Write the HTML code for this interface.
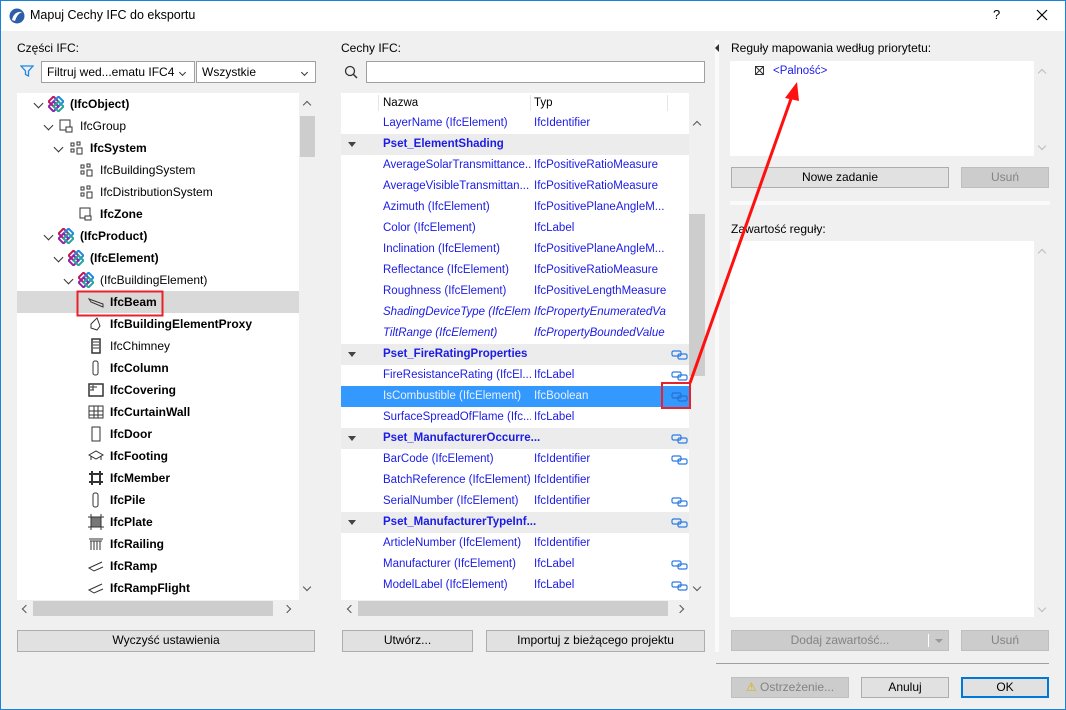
<!DOCTYPE html>
<html><head><meta charset="utf-8"><style>
*{box-sizing:border-box;margin:0;padding:0}
body{width:1066px;height:710px;background:#f0f0f0;font-family:"Liberation Sans",sans-serif;font-size:12px;color:#000;position:relative;overflow:hidden}
.a{position:absolute}
.win{left:0;top:0;width:1066px;height:710px;border:1px solid #1883d7}
.title{left:1px;top:1px;width:1064px;height:30px;background:#fff}
.lbl{position:absolute;white-space:nowrap}
.sel{position:absolute;height:22px;background:#fff;border:1px solid #a0a0a0;padding:3px 5px;white-space:nowrap}
.btn{position:absolute;height:21px;background:#e1e1e1;border:1px solid #adadad;text-align:center;line-height:19px;white-space:nowrap}
.dis{background:#cccccc;border-color:#bfbfbf;color:#838383}
.tree{left:17px;top:93px;width:282px;height:507px;background:#fff;overflow:hidden}
.row{position:absolute;height:22px;line-height:22px;white-space:nowrap;left:0;width:282px}
.b{font-weight:bold}
.chev{position:absolute;top:7px;width:7px;height:7px;border-right:1.5px solid #333;border-bottom:1.5px solid #333;transform:rotate(45deg)}
.sc{position:absolute;width:6px;height:6px;border-right:1.3px solid #555;border-bottom:1.3px solid #555}
.up{transform:rotate(-135deg)}.dn{transform:rotate(45deg)}.lf{transform:rotate(135deg)}.rt{transform:rotate(-45deg)}
.ico{position:absolute;top:3px;width:16px;height:16px}
.tbl{left:341px;top:93px;width:348px;height:507px;background:#fff;overflow:hidden;font-size:11.5px}
.tr{position:absolute;left:0;width:348px;height:21px;line-height:21px;color:#1b1be6;white-space:nowrap}
.tr .n{position:absolute;left:42px;width:148px;overflow:hidden}
.tr .t{position:absolute;left:193px;width:132px;overflow:hidden}
.g{background:#ececec;font-weight:bold}
.g .n{width:200px}
.tri{position:absolute;left:7px;top:8px;border-left:4px solid transparent;border-right:4px solid transparent;border-top:5px solid #444}
.lk{position:absolute;left:330px;top:6px;width:18px;height:10px}
.i{font-style:italic}
</style></head><body>
<div class="a win"></div>
<div class="a title"></div>
<svg class="a" style="left:9px;top:8px" width="16" height="16"><circle cx="8" cy="8" r="7.5" fill="#2d5fa8"/><path d="M3 12 Q5 3 13 4 Q8 6 6 13Z" fill="#fff"/></svg>
<div class="lbl" style="left:30px;top:8px;font-size:12.5px">Mapuj Cechy IFC do eksportu</div>
<div class="lbl" style="left:993px;top:7px;font-size:13px">?</div>
<svg class="a" style="left:1036px;top:9px" width="12" height="12"><path d="M1 1L11 11M11 1L1 11" stroke="#000" stroke-width="1.2"/></svg>

<!-- left -->
<div class="lbl" style="left:17px;top:41px">Części IFC:</div>
<svg class="a" style="left:20px;top:64px" width="14" height="14"><path d="M1 2H13L8.5 7V12L5.5 10.5V7Z" fill="none" stroke="#1e88e5" stroke-width="1.3"/></svg>
<div class="sel" style="left:41px;top:61px;width:154px">Filtruj wed...ematu IFC4</div>
<div class="chev" style="left:180px;top:70px;width:5px;height:5px;border-width:1px"></div>
<div class="sel" style="left:196px;top:61px;width:120px">Wszystkie</div>
<div class="chev" style="left:302px;top:70px;width:5px;height:5px;border-width:1px"></div>

<div class="a tree">
<div class="row" style="top:0"><div class="chev" style="left:18px"></div><svg class="ico" style="left:31px" viewBox="0 0 16 16"><rect x="2" y="2" width="7" height="7" transform="rotate(45 5.5 5.5)" fill="none" stroke="#c2185b" stroke-width="2"/><rect x="7" y="2" width="7" height="7" transform="rotate(45 10.5 5.5)" fill="none" stroke="#1e88e5" stroke-width="2"/><rect x="2" y="7" width="7" height="7" transform="rotate(45 5.5 10.5)" fill="none" stroke="#8e24aa" stroke-width="2"/><rect x="7" y="7" width="7" height="7" transform="rotate(45 10.5 10.5)" fill="none" stroke="#26a69a" stroke-width="2"/></svg><span class="b" style="position:absolute;left:53px">(IfcObject)</span></div>
<div class="row" style="top:22px"><div class="chev" style="left:28px"></div><svg class="ico" style="left:41px" viewBox="0 0 16 16"><rect x="2" y="2" width="10" height="10" fill="none" stroke="#333"/><rect x="8" y="9" width="6" height="5" fill="#fff" stroke="#333"/></svg><span style="position:absolute;left:63px">IfcGroup</span></div>
<div class="row" style="top:44px"><div class="chev" style="left:38px"></div><svg class="ico" style="left:51px" viewBox="0 0 16 16"><path d="M3 3h3v3H3zM9 2h3v3H9zM3 9h3v3H3zM9 8h5v6H9z" fill="none" stroke="#333"/></svg><span class="b" style="position:absolute;left:73px">IfcSystem</span></div>
<div class="row" style="top:66px"><svg class="ico" style="left:61px" viewBox="0 0 16 16"><path d="M3 3h3v3H3zM9 2h3v3H9zM3 9h3v3H3zM9 8h5v6H9z" fill="none" stroke="#333"/></svg><span style="position:absolute;left:83px">IfcBuildingSystem</span></div>
<div class="row" style="top:88px"><svg class="ico" style="left:61px" viewBox="0 0 16 16"><path d="M3 3h3v3H3zM9 2h3v3H9zM3 9h3v3H3zM9 8h5v6H9z" fill="none" stroke="#333"/></svg><span style="position:absolute;left:83px">IfcDistributionSystem</span></div>
<div class="row" style="top:110px"><svg class="ico" style="left:61px" viewBox="0 0 16 16"><rect x="2" y="2" width="10" height="10" fill="none" stroke="#333"/><rect x="7" y="10" width="6" height="4" fill="#fff" stroke="#333"/></svg><span class="b" style="position:absolute;left:83px">IfcZone</span></div>
<div class="row" style="top:132px"><div class="chev" style="left:28px"></div><svg class="ico" style="left:41px" viewBox="0 0 16 16"><rect x="2" y="2" width="7" height="7" transform="rotate(45 5.5 5.5)" fill="none" stroke="#c2185b" stroke-width="2"/><rect x="7" y="2" width="7" height="7" transform="rotate(45 10.5 5.5)" fill="none" stroke="#1e88e5" stroke-width="2"/><rect x="2" y="7" width="7" height="7" transform="rotate(45 5.5 10.5)" fill="none" stroke="#8e24aa" stroke-width="2"/><rect x="7" y="7" width="7" height="7" transform="rotate(45 10.5 10.5)" fill="none" stroke="#26a69a" stroke-width="2"/></svg><span class="b" style="position:absolute;left:63px">(IfcProduct)</span></div>
<div class="row" style="top:154px"><div class="chev" style="left:38px"></div><svg class="ico" style="left:51px" viewBox="0 0 16 16"><rect x="2" y="2" width="7" height="7" transform="rotate(45 5.5 5.5)" fill="none" stroke="#c2185b" stroke-width="2"/><rect x="7" y="2" width="7" height="7" transform="rotate(45 10.5 5.5)" fill="none" stroke="#1e88e5" stroke-width="2"/><rect x="2" y="7" width="7" height="7" transform="rotate(45 5.5 10.5)" fill="none" stroke="#8e24aa" stroke-width="2"/><rect x="7" y="7" width="7" height="7" transform="rotate(45 10.5 10.5)" fill="none" stroke="#26a69a" stroke-width="2"/></svg><span class="b" style="position:absolute;left:73px">(IfcElement)</span></div>
<div class="row" style="top:176px"><div class="chev" style="left:48px"></div><svg class="ico" style="left:61px" viewBox="0 0 16 16"><rect x="2" y="2" width="7" height="7" transform="rotate(45 5.5 5.5)" fill="none" stroke="#c2185b" stroke-width="2"/><rect x="7" y="2" width="7" height="7" transform="rotate(45 10.5 5.5)" fill="none" stroke="#1e88e5" stroke-width="2"/><rect x="2" y="7" width="7" height="7" transform="rotate(45 5.5 10.5)" fill="none" stroke="#8e24aa" stroke-width="2"/><rect x="7" y="7" width="7" height="7" transform="rotate(45 10.5 10.5)" fill="none" stroke="#26a69a" stroke-width="2"/></svg><span style="position:absolute;left:83px">(IfcBuildingElement)</span></div>
<div class="row" style="top:198px;background:#d9d9d9"><svg class="ico" style="left:71px" viewBox="0 0 16 16"><path d="M1 5L15 10V13L3 8Z" fill="none" stroke="#333"/></svg><span class="b" style="position:absolute;left:93px">IfcBeam</span></div>
<div class="row" style="top:220px"><svg class="ico" style="left:71px" viewBox="0 0 16 16"><path d="M3 8L9 2L12 10L9 14L3 12Z" fill="none" stroke="#333"/></svg><span class="b" style="position:absolute;left:93px">IfcBuildingElementProxy</span></div>
<div class="row" style="top:242px"><svg class="ico" style="left:71px" viewBox="0 0 16 16"><rect x="4" y="1" width="8" height="14" fill="none" stroke="#333" stroke-width="1.5"/><path d="M5 4h6M5 7h6M5 10h6" stroke="#333"/></svg><span style="position:absolute;left:93px">IfcChimney</span></div>
<div class="row" style="top:264px"><svg class="ico" style="left:71px" viewBox="0 0 16 16"><rect x="5" y="1" width="5" height="14" rx="2" fill="none" stroke="#333"/></svg><span class="b" style="position:absolute;left:93px">IfcColumn</span></div>
<div class="row" style="top:286px"><svg class="ico" style="left:71px" viewBox="0 0 16 16"><rect x="1" y="2" width="14" height="12" fill="none" stroke="#333" stroke-width="1.5"/><path d="M2 5h7M2 8h4M5 3v5" stroke="#333"/></svg><span class="b" style="position:absolute;left:93px">IfcCovering</span></div>
<div class="row" style="top:308px"><svg class="ico" style="left:71px" viewBox="0 0 16 16"><rect x="1" y="2" width="14" height="12" fill="none" stroke="#333"/><path d="M1 7h14M1 11h14M6 2v12M10 2v12" stroke="#333"/></svg><span class="b" style="position:absolute;left:93px">IfcCurtainWall</span></div>
<div class="row" style="top:330px"><svg class="ico" style="left:71px" viewBox="0 0 16 16"><rect x="4" y="1" width="8" height="14" fill="none" stroke="#333"/></svg><span class="b" style="position:absolute;left:93px">IfcDoor</span></div>
<div class="row" style="top:352px"><svg class="ico" style="left:71px" viewBox="0 0 16 16"><path d="M1 7L8 3L15 7L8 11Z M3 8v4M13 8v4" fill="none" stroke="#333"/></svg><span class="b" style="position:absolute;left:93px">IfcFooting</span></div>
<div class="row" style="top:374px"><svg class="ico" style="left:71px" viewBox="0 0 16 16"><path d="M4 1v14M12 1v14M1 4h14M1 12h14" stroke="#333" stroke-width="2"/></svg><span class="b" style="position:absolute;left:93px">IfcMember</span></div>
<div class="row" style="top:396px"><svg class="ico" style="left:71px" viewBox="0 0 16 16"><rect x="5" y="1" width="5" height="14" rx="2" fill="none" stroke="#333"/></svg><span class="b" style="position:absolute;left:93px">IfcPile</span></div>
<div class="row" style="top:418px"><svg class="ico" style="left:71px" viewBox="0 0 16 16"><rect x="3" y="3" width="10" height="10" fill="#777" stroke="#333"/><path d="M3 0v16M13 0v16M0 3h16M0 13h16" stroke="#333"/></svg><span class="b" style="position:absolute;left:93px">IfcPlate</span></div>
<div class="row" style="top:440px"><svg class="ico" style="left:71px" viewBox="0 0 16 16"><path d="M1 3h14M2 5h12M3 5v9M6 5v9M9 5v9M12 5v9" stroke="#333"/></svg><span class="b" style="position:absolute;left:93px">IfcRailing</span></div>
<div class="row" style="top:462px"><svg class="ico" style="left:71px" viewBox="0 0 16 16"><path d="M14 4L1 10L6 13L15 9" fill="none" stroke="#333"/></svg><span class="b" style="position:absolute;left:93px">IfcRamp</span></div>
<div class="row" style="top:484px"><svg class="ico" style="left:71px" viewBox="0 0 16 16"><path d="M14 4L1 10L6 13L15 9" fill="none" stroke="#333"/></svg><span class="b" style="position:absolute;left:93px">IfcRampFlight</span></div>
</div>
<div class="a" style="left:299px;top:93px;width:16px;height:507px;background:#f0f0f0"></div>
<div class="a" style="left:300px;top:116px;width:15px;height:41px;background:#cdcdcd"></div>
<div class="sc up" style="left:304px;top:102px"></div>
<div class="sc dn" style="left:304px;top:584px"></div>
<div class="a" style="left:17px;top:600px;width:298px;height:17px;background:#f0f0f0"></div>
<div class="a" style="left:33px;top:601px;width:240px;height:15px;background:#cdcdcd"></div>
<div class="sc lf" style="left:23px;top:606px"></div><div class="sc rt" style="left:284px;top:606px"></div>
<div class="btn" style="left:17px;top:630px;width:298px;height:22px">Wyczyść ustawienia</div>

<!-- middle -->
<div class="lbl" style="left:341px;top:41px">Cechy IFC:</div>
<svg class="a" style="left:344px;top:65px" width="14" height="14"><circle cx="6" cy="6" r="4.5" fill="none" stroke="#333" stroke-width="1.3"/><path d="M9.5 9.5L13 13" stroke="#333" stroke-width="1.5"/></svg>
<div class="sel" style="left:366px;top:61px;width:339px"></div>
<div class="a tbl">
<div class="tr" style="top:0;height:20px;color:#000;background:#fff"><span class="n">Nazwa</span><span class="t">Typ</span><div class="a" style="left:37px;top:2px;width:1px;height:16px;background:#e5e5e5"></div><div class="a" style="left:189px;top:2px;width:1px;height:16px;background:#e5e5e5"></div><div class="a" style="left:326px;top:2px;width:1px;height:16px;background:#e5e5e5"></div></div>
<div class="tr" style="top:20px"><span class="n">LayerName (IfcElement)</span><span class="t">IfcIdentifier</span></div>
<div class="tr g" style="top:41px"><div class="tri"></div><span class="n">Pset_ElementShading</span></div>
<div class="tr" style="top:62px"><span class="n">AverageSolarTransmittance...</span><span class="t">IfcPositiveRatioMeasure</span></div>
<div class="tr" style="top:83px"><span class="n">AverageVisibleTransmittan...</span><span class="t">IfcPositiveRatioMeasure</span></div>
<div class="tr" style="top:104px"><span class="n">Azimuth (IfcElement)</span><span class="t">IfcPositivePlaneAngleM...</span></div>
<div class="tr" style="top:125px"><span class="n">Color (IfcElement)</span><span class="t">IfcLabel</span></div>
<div class="tr" style="top:146px"><span class="n">Inclination (IfcElement)</span><span class="t">IfcPositivePlaneAngleM...</span></div>
<div class="tr" style="top:167px"><span class="n">Reflectance (IfcElement)</span><span class="t">IfcPositiveRatioMeasure</span></div>
<div class="tr" style="top:188px"><span class="n">Roughness (IfcElement)</span><span class="t">IfcPositiveLengthMeasure</span></div>
<div class="tr i" style="top:209px"><span class="n">ShadingDeviceType (IfcElemen...</span><span class="t">IfcPropertyEnumeratedVal...</span></div>
<div class="tr i" style="top:230px"><span class="n">TiltRange (IfcElement)</span><span class="t">IfcPropertyBoundedValue (...</span></div>
<div class="tr g" style="top:251px"><div class="tri"></div><span class="n">Pset_FireRatingProperties</span><svg class="lk" viewBox="0 0 18 10"><rect x="1" y="1" width="9" height="5" rx="1.5" fill="none" stroke="#2a7be4" stroke-width="1.2"/><rect x="7" y="4" width="9" height="5" rx="1.5" fill="none" stroke="#2a7be4" stroke-width="1.2"/></svg></div>
<div class="tr" style="top:272px"><span class="n">FireResistanceRating (IfcEl...</span><span class="t">IfcLabel</span><svg class="lk" viewBox="0 0 18 10"><rect x="1" y="1" width="9" height="5" rx="1.5" fill="none" stroke="#2a7be4" stroke-width="1.2"/><rect x="7" y="4" width="9" height="5" rx="1.5" fill="none" stroke="#2a7be4" stroke-width="1.2"/></svg></div>
<div class="tr" style="top:293px;background:#3399ff;color:#e8f0ff"><span class="n">IsCombustible (IfcElement)</span><span class="t">IfcBoolean</span><svg class="lk" viewBox="0 0 18 10"><rect x="1" y="1" width="9" height="5" rx="1.5" fill="none" stroke="#2a6fd0" stroke-width="1.2"/><rect x="7" y="4" width="9" height="5" rx="1.5" fill="none" stroke="#2a6fd0" stroke-width="1.2"/></svg></div>
<div class="tr" style="top:314px"><span class="n">SurfaceSpreadOfFlame (Ifc...</span><span class="t">IfcLabel</span></div>
<div class="tr g" style="top:335px"><div class="tri"></div><span class="n">Pset_ManufacturerOccurre...</span><svg class="lk" viewBox="0 0 18 10"><rect x="1" y="1" width="9" height="5" rx="1.5" fill="none" stroke="#2a7be4" stroke-width="1.2"/><rect x="7" y="4" width="9" height="5" rx="1.5" fill="none" stroke="#2a7be4" stroke-width="1.2"/></svg></div>
<div class="tr" style="top:356px"><span class="n">BarCode (IfcElement)</span><span class="t">IfcIdentifier</span><svg class="lk" viewBox="0 0 18 10"><rect x="1" y="1" width="9" height="5" rx="1.5" fill="none" stroke="#2a7be4" stroke-width="1.2"/><rect x="7" y="4" width="9" height="5" rx="1.5" fill="none" stroke="#2a7be4" stroke-width="1.2"/></svg></div>
<div class="tr" style="top:377px"><span class="n">BatchReference (IfcElement)</span><span class="t">IfcIdentifier</span></div>
<div class="tr" style="top:398px"><span class="n">SerialNumber (IfcElement)</span><span class="t">IfcIdentifier</span><svg class="lk" viewBox="0 0 18 10"><rect x="1" y="1" width="9" height="5" rx="1.5" fill="none" stroke="#2a7be4" stroke-width="1.2"/><rect x="7" y="4" width="9" height="5" rx="1.5" fill="none" stroke="#2a7be4" stroke-width="1.2"/></svg></div>
<div class="tr g" style="top:419px"><div class="tri"></div><span class="n">Pset_ManufacturerTypeInf...</span><svg class="lk" viewBox="0 0 18 10"><rect x="1" y="1" width="9" height="5" rx="1.5" fill="none" stroke="#2a7be4" stroke-width="1.2"/><rect x="7" y="4" width="9" height="5" rx="1.5" fill="none" stroke="#2a7be4" stroke-width="1.2"/></svg></div>
<div class="tr" style="top:440px"><span class="n">ArticleNumber (IfcElement)</span><span class="t">IfcIdentifier</span></div>
<div class="tr" style="top:461px"><span class="n">Manufacturer (IfcElement)</span><span class="t">IfcLabel</span><svg class="lk" viewBox="0 0 18 10"><rect x="1" y="1" width="9" height="5" rx="1.5" fill="none" stroke="#2a7be4" stroke-width="1.2"/><rect x="7" y="4" width="9" height="5" rx="1.5" fill="none" stroke="#2a7be4" stroke-width="1.2"/></svg></div>
<div class="tr" style="top:482px"><span class="n">ModelLabel (IfcElement)</span><span class="t">IfcLabel</span><svg class="lk" viewBox="0 0 18 10"><rect x="1" y="1" width="9" height="5" rx="1.5" fill="none" stroke="#2a7be4" stroke-width="1.2"/><rect x="7" y="4" width="9" height="5" rx="1.5" fill="none" stroke="#2a7be4" stroke-width="1.2"/></svg></div>
</div>
<div class="a" style="left:689px;top:113px;width:16px;height:487px;background:#f0f0f0"></div>
<div class="a" style="left:689px;top:214px;width:16px;height:162px;background:#cdcdcd"></div>
<div class="sc up" style="left:694px;top:122px"></div>
<div class="sc dn" style="left:694px;top:584px"></div>
<div class="a" style="left:341px;top:600px;width:364px;height:17px;background:#f0f0f0"></div>
<div class="a" style="left:358px;top:601px;width:310px;height:15px;background:#cdcdcd"></div>
<div class="sc lf" style="left:348px;top:606px"></div><div class="sc rt" style="left:677px;top:606px"></div>
<div class="btn" style="left:342px;top:630px;width:131px;height:22px">Utwórz...</div>
<div class="btn" style="left:486px;top:630px;width:219px;height:22px">Importuj z bieżącego projektu</div>

<!-- divider -->
<div class="a" style="left:715px;top:40px;width:4px;height:612px;background:#fafafa"></div>
<div class="a" style="left:715px;top:44px;border-top:4px solid transparent;border-bottom:4px solid transparent;border-right:4px solid #333"></div>

<!-- right -->
<div class="lbl" style="left:731px;top:41px">Reguły mapowania według priorytetu:</div>
<div class="a" style="left:730px;top:61px;width:304px;height:95px;background:#fff"></div>
<div class="a" style="left:755px;top:66px;width:9px;height:9px;border:1px solid #333"></div>
<svg class="a" style="left:755px;top:66px" width="9" height="9"><path d="M1 1L8 8M8 1L1 8" stroke="#333"/></svg>
<div class="lbl" style="left:773px;top:65px;color:#1b1be6;font-size:11.5px">&lt;Palność&gt;</div>
<div class="sc up" style="left:1039px;top:70px;border-color:#bbb"></div>
<div class="sc dn" style="left:1039px;top:143px;border-color:#bbb"></div>
<div class="btn" style="left:731px;top:167px;width:218px">Nowe zadanie</div>
<div class="btn dis" style="left:961px;top:167px;width:88px">Usuń</div>
<div class="a" style="left:730px;top:201px;width:320px;height:4px;background:#fafafa"></div>
<div class="lbl" style="left:731px;top:222px">Zawartość reguły:</div>
<div class="a" style="left:730px;top:241px;width:304px;height:376px;background:#fff"></div>
<div class="sc up" style="left:1039px;top:250px;border-color:#bbb"></div>
<div class="sc dn" style="left:1039px;top:605px;border-color:#bbb"></div>
<div class="btn dis" style="left:731px;top:630px;width:218px">Dodaj zawartość...<div class="a" style="left:196px;top:3px;width:1px;height:13px;background:#fff"></div><div class="a" style="left:203px;top:8px;border-left:4px solid transparent;border-right:4px solid transparent;border-top:4px solid #999"></div></div>
<div class="btn dis" style="left:961px;top:630px;width:88px">Usuń</div>
<div class="a" style="left:716px;top:663px;width:333px;height:1px;background:#a0a0a0"></div>
<div class="btn dis" style="left:731px;top:677px;width:118px"><span style="color:#d9b000">&#9888;</span> Ostrzeżenie...</div>
<div class="btn" style="left:861px;top:677px;width:88px">Anuluj</div>
<div class="btn" style="left:961px;top:677px;width:88px;border:2px solid #0078d7;line-height:17px">OK</div>

<!-- annotations -->
<svg class="a" style="left:0;top:0" width="1066" height="710">
<rect x="77.5" y="291.5" width="85" height="24" fill="none" stroke="#e8222a" stroke-width="2"/>
<rect x="662" y="383" width="28" height="25" fill="none" stroke="#e8222a" stroke-width="2"/>
<path d="M690 383L792 96" stroke="#ff1010" stroke-width="3"/>
<path d="M797 82L785 98L799 101Z" fill="#ff1010"/>
</svg>
</body></html>
